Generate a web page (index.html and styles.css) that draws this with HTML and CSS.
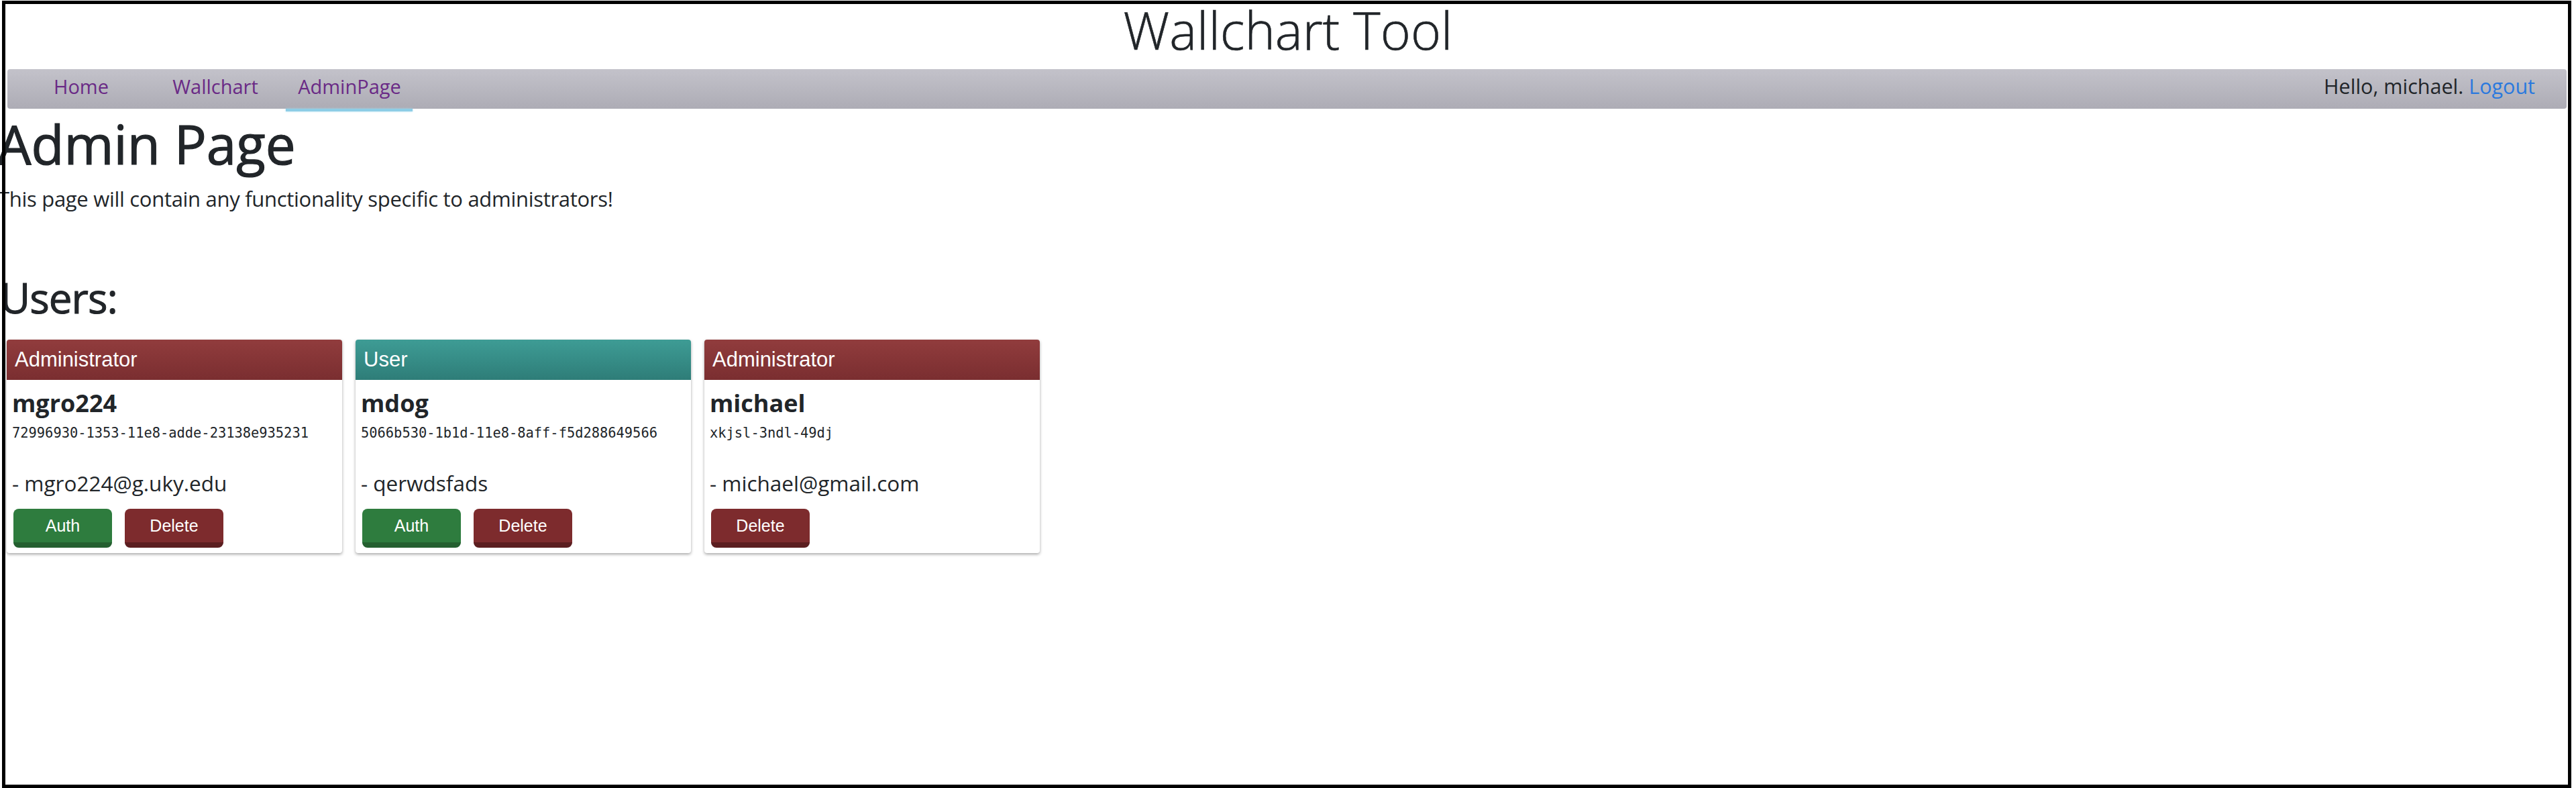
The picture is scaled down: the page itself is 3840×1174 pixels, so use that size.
FILE: index.html
```html
<!DOCTYPE html>
<html>
<head>
<meta charset="utf-8">
<title>Wallchart Tool</title>
<link rel="stylesheet" href="styles.css">
</head>
<body>
<div class="page">
  <header class="site-header">
    <div class="site-title">Wallchart Tool</div>
  </header>
  <nav class="navbar">
    <div class="nav-links">
      <a class="nav-link" href="#">Home</a>
      <a class="nav-link" href="#">Wallchart</a>
      <a class="nav-link active" href="#">AdminPage</a>
    </div>
    <div class="nav-user">Hello, michael. <a class="logout" href="#">Logout</a></div>
  </nav>
  <main class="content">
    <h1 class="page-title">Admin Page</h1>
    <p class="intro">This page will contain any functionality specific to administrators!</p>
    <h2 class="section-title">Users:</h2>
    <div class="cards">
      <div class="card">
        <div class="card-header admin">Administrator</div>
        <div class="card-body">
          <div class="user-name">mgro224</div>
          <div class="user-id">72996930-1353-11e8-adde-23138e935231</div>
          <div class="user-email">- mgro224@g.uky.edu</div>
          <div class="actions">
            <button class="btn btn-green">Auth</button>
            <button class="btn btn-red">Delete</button>
          </div>
        </div>
      </div>
      <div class="card">
        <div class="card-header user">User</div>
        <div class="card-body">
          <div class="user-name">mdog</div>
          <div class="user-id">5066b530-1b1d-11e8-8aff-f5d288649566</div>
          <div class="user-email">- qerwdsfads</div>
          <div class="actions">
            <button class="btn btn-green">Auth</button>
            <button class="btn btn-red">Delete</button>
          </div>
        </div>
      </div>
      <div class="card">
        <div class="card-header admin">Administrator</div>
        <div class="card-body">
          <div class="user-name">michael</div>
          <div class="user-id">xkjsl-3ndl-49dj</div>
          <div class="user-email">- michael@gmail.com</div>
          <div class="actions">
            <button class="btn btn-red">Delete</button>
          </div>
        </div>
      </div>
    </div>
  </main>
  <div class="frame"></div>
</div>
</body>
</html>
```

FILE: styles.css
```css
html, body {
  margin: 0;
  padding: 0;
  background: #ffffff;
}
body {
  font-family: "Open Sans", "Noto Sans", sans-serif;
  color: #212529;
}
.page {
  position: relative;
  width: 3840px;
  height: 1174px;
  overflow: hidden;
}
.frame {
  position: absolute;
  left: 3px;
  top: 1px;
  width: 3830px;
  height: 1173px;
  box-sizing: border-box;
  border: 5px solid #000;
  pointer-events: none;
}
.site-header {
  box-sizing: border-box;
  height: 103px;
  padding-top: 6px;
  text-align: center;
}
.site-title {
  font-size: 77px;
  font-weight: 300;
  -webkit-text-stroke: 0.6px #212529;
  line-height: 78px;
  color: #212529;
}
.navbar {
  box-sizing: border-box;
  height: 59px;
  margin: 0 14px 0 11px;
  padding: 0 47px 8px 10px;
  border-radius: 4px;
  background: linear-gradient(#c3c2ca, #adacb5);
  display: flex;
  justify-content: space-between;
  align-items: flex-start;
}
.nav-links {
  display: flex;
}
.nav-link {
  position: relative;
  width: 200px;
  text-align: center;
  font-size: 29px;
  font-weight: 400;
  line-height: 51px;
  color: #6a2a86;
  text-decoration: none;
}
.nav-link.active::after {
  content: "";
  position: absolute;
  left: 5px;
  right: 6px;
  bottom: -12px;
  height: 4px;
  background: #8dcde6;
  box-shadow: 0 0 3px #a8dcef;
}
.nav-user {
  font-size: 30.5px;
  font-weight: 400;
  line-height: 51px;
  color: #212529;
}
.logout {
  color: #2a79de;
  text-decoration: none;
}
.content {
  padding: 4px 0 0 0;
}
.page-title {
  margin: 0;
  font-size: 80px;
  font-weight: 400;
  -webkit-text-stroke: 1.2px #212529;
  line-height: 96px;
  margin-left: -4px;
}
.intro {
  margin: 10px 0 0 0;
  font-size: 31px;
  font-weight: 400;
  line-height: 48px;
  margin-left: -3px;
  letter-spacing: -0.3px;
}
.section-title {
  margin: 86px 0 0 0;
  font-size: 62px;
  font-weight: 400;
  -webkit-text-stroke: 1px #212529;
  line-height: 74px;
  letter-spacing: -1px;
}
.cards {
  display: flex;
  gap: 20px;
  padding-left: 10px;
  margin-top: 26px;
}
.card {
  width: 500px;
  border-radius: 4px;
  background: #fff;
  box-shadow: 0 2px 4px rgba(0, 0, 0, 0.35);
}
.card-header {
  height: 60px;
  box-sizing: border-box;
  padding: 0 12px;
  border-radius: 4px 4px 0 0;
  font-family: "Liberation Sans", Arial, sans-serif;
  font-size: 31px;
  line-height: 60px;
  color: #ffffff;
}
.card-header.admin {
  background: linear-gradient(#913c3d, #7a2e30);
}
.card-header.user {
  background: linear-gradient(#3e9c95, #2e7d78);
}
.card-body {
  padding: 13px 8px 8px 8px;
}
.user-name {
  font-size: 36px;
  font-weight: 700;
  line-height: 43px;
}
.user-id {
  margin-top: 11px;
  font-family: "DejaVu Sans Mono", "Liberation Mono", monospace;
  font-size: 20.4px;
  line-height: 25px;
}
.user-email {
  margin-top: 39px;
  font-size: 31.5px;
  font-weight: 400;
  line-height: 45px;
}
.actions {
  display: flex;
  gap: 19px;
  margin-top: 16px;
  padding-left: 2px;
}
.btn {
  width: 147px;
  height: 58px;
  box-sizing: border-box;
  border: none;
  border-bottom: 8px solid;
  border-radius: 8px;
  padding: 0;
  font-family: "Liberation Sans", Arial, sans-serif;
  font-size: 25px;
  line-height: 50px;
  color: #ffffff;
}
.btn-green {
  background: #2e7c3e;
  border-bottom-color: #245f30;
}
.btn-red {
  background: #7d2b2d;
  border-bottom-color: #5b1e20;
}
```
